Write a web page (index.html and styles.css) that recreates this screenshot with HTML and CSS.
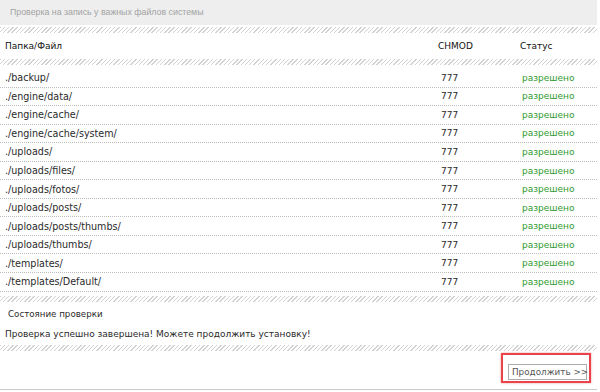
FILE: index.html
```html
<!DOCTYPE html>
<html lang="ru">
<head>
<meta charset="utf-8">
<title>Проверка</title>
<link rel="stylesheet" href="styles.css">
</head>
<body>
<div class="page">
  <div class="titlebar">Проверка на запись у важных файлов системы</div>
  <div class="hatch hatch-top"></div>
  <div class="row head">
    <span class="c-path">Папка/Файл</span>
    <span class="c-chmod">CHMOD</span>
    <span class="c-status">Статус</span>
  </div>
  <div class="hatch"></div>
  <div class="list">
    <div class="row item"><span class="c-path">./backup/</span><span class="c-chmod">777</span><span class="c-status ok">разрешено</span></div>
    <div class="row item"><span class="c-path">./engine/data/</span><span class="c-chmod">777</span><span class="c-status ok">разрешено</span></div>
    <div class="row item"><span class="c-path">./engine/cache/</span><span class="c-chmod">777</span><span class="c-status ok">разрешено</span></div>
    <div class="row item"><span class="c-path">./engine/cache/system/</span><span class="c-chmod">777</span><span class="c-status ok">разрешено</span></div>
    <div class="row item"><span class="c-path">./uploads/</span><span class="c-chmod">777</span><span class="c-status ok">разрешено</span></div>
    <div class="row item"><span class="c-path">./uploads/files/</span><span class="c-chmod">777</span><span class="c-status ok">разрешено</span></div>
    <div class="row item"><span class="c-path">./uploads/fotos/</span><span class="c-chmod">777</span><span class="c-status ok">разрешено</span></div>
    <div class="row item"><span class="c-path">./uploads/posts/</span><span class="c-chmod">777</span><span class="c-status ok">разрешено</span></div>
    <div class="row item"><span class="c-path">./uploads/posts/thumbs/</span><span class="c-chmod">777</span><span class="c-status ok">разрешено</span></div>
    <div class="row item"><span class="c-path">./uploads/thumbs/</span><span class="c-chmod">777</span><span class="c-status ok">разрешено</span></div>
    <div class="row item"><span class="c-path">./templates/</span><span class="c-chmod">777</span><span class="c-status ok">разрешено</span></div>
    <div class="row item"><span class="c-path">./templates/Default/</span><span class="c-chmod">777</span><span class="c-status ok">разрешено</span></div>
  </div>
  <div class="hatch"></div>
  <div class="state">Состояние проверки</div>
  <div class="msg">Проверка успешно завершена! Можете продолжить установку!</div>
  <div class="hatch"></div>
  <div class="actions">
    <span class="highlight"><button class="btn" type="button">Продолжить &gt;&gt;</button></span>
  </div>
  <div class="footer"></div>
</div>
</body>
</html>
```

FILE: styles.css
```css
html, body {
  margin: 0;
  padding: 0;
  background: #ffffff;
}
.page {
  width: 597px;
  font-family: "DejaVu Sans", Verdana, sans-serif;
  font-size: 9px;
  color: #2a2a2a;
}
.titlebar {
  height: 25px;
  line-height: 25px;
  background: #eeeeee;
  padding-left: 10px;
  color: #a3a3a3;
  font-family: "Liberation Sans", Arial, sans-serif;
  font-size: 8.8px;
}
.hatch {
  height: 6px;
  background: repeating-linear-gradient(135deg, #d2d2d2 0, #d2d2d2 1px, #ffffff 1px, #ffffff 3px);
}
.hatch-top {
  margin-top: 2px;
}
.row {
  display: flex;
  align-items: center;
}
.head {
  height: 26px;
  color: #111;
}
.c-path {
  flex: 1;
  padding-left: 5px;
}
.item .c-path {
  font-size: 9.6px;
}
.c-chmod {
  width: 82px;
}
.c-status {
  width: 77px;
}
.item .c-chmod {
  width: 81px;
}
.item .c-status {
  width: 75px;
}
.list {
  padding: 4px 0 4px;
}
.item {
  height: 17.55px;
  border-bottom: 1px dotted #bdbdbd;
}
.ok {
  color: #2f9a2f;
}
.state {
  padding: 7px 0 0 8px;
  height: 16px;
  font-size: 8.7px;
}
.msg {
  padding: 4px 0 0 5px;
  height: 16px;
}
.actions {
  display: flex;
  justify-content: flex-end;
  padding: 2px 6px 6px 0;
}
.highlight {
  display: flex;
  border: 2px solid #e8444b;
  width: 90px;
  height: 30px;
  padding: 9px 2px 1px 5px;
  box-sizing: border-box;
  box-shadow: 0 0 2px rgba(232, 68, 75, 0.55);
}
.btn {
  font-family: "DejaVu Sans", Verdana, sans-serif;
  font-size: 8.8px;
  color: #555;
  background: #fff;
  border: 1px solid #adadad;
  padding: 0 0 0 3px;
  margin: 0;
  width: 79px;
  height: 16px;
  line-height: 14px;
  text-align: left;
  white-space: nowrap;
  box-sizing: border-box;
}
.footer {
  height: 1px;
  background: #c9c9c9;
}
```
